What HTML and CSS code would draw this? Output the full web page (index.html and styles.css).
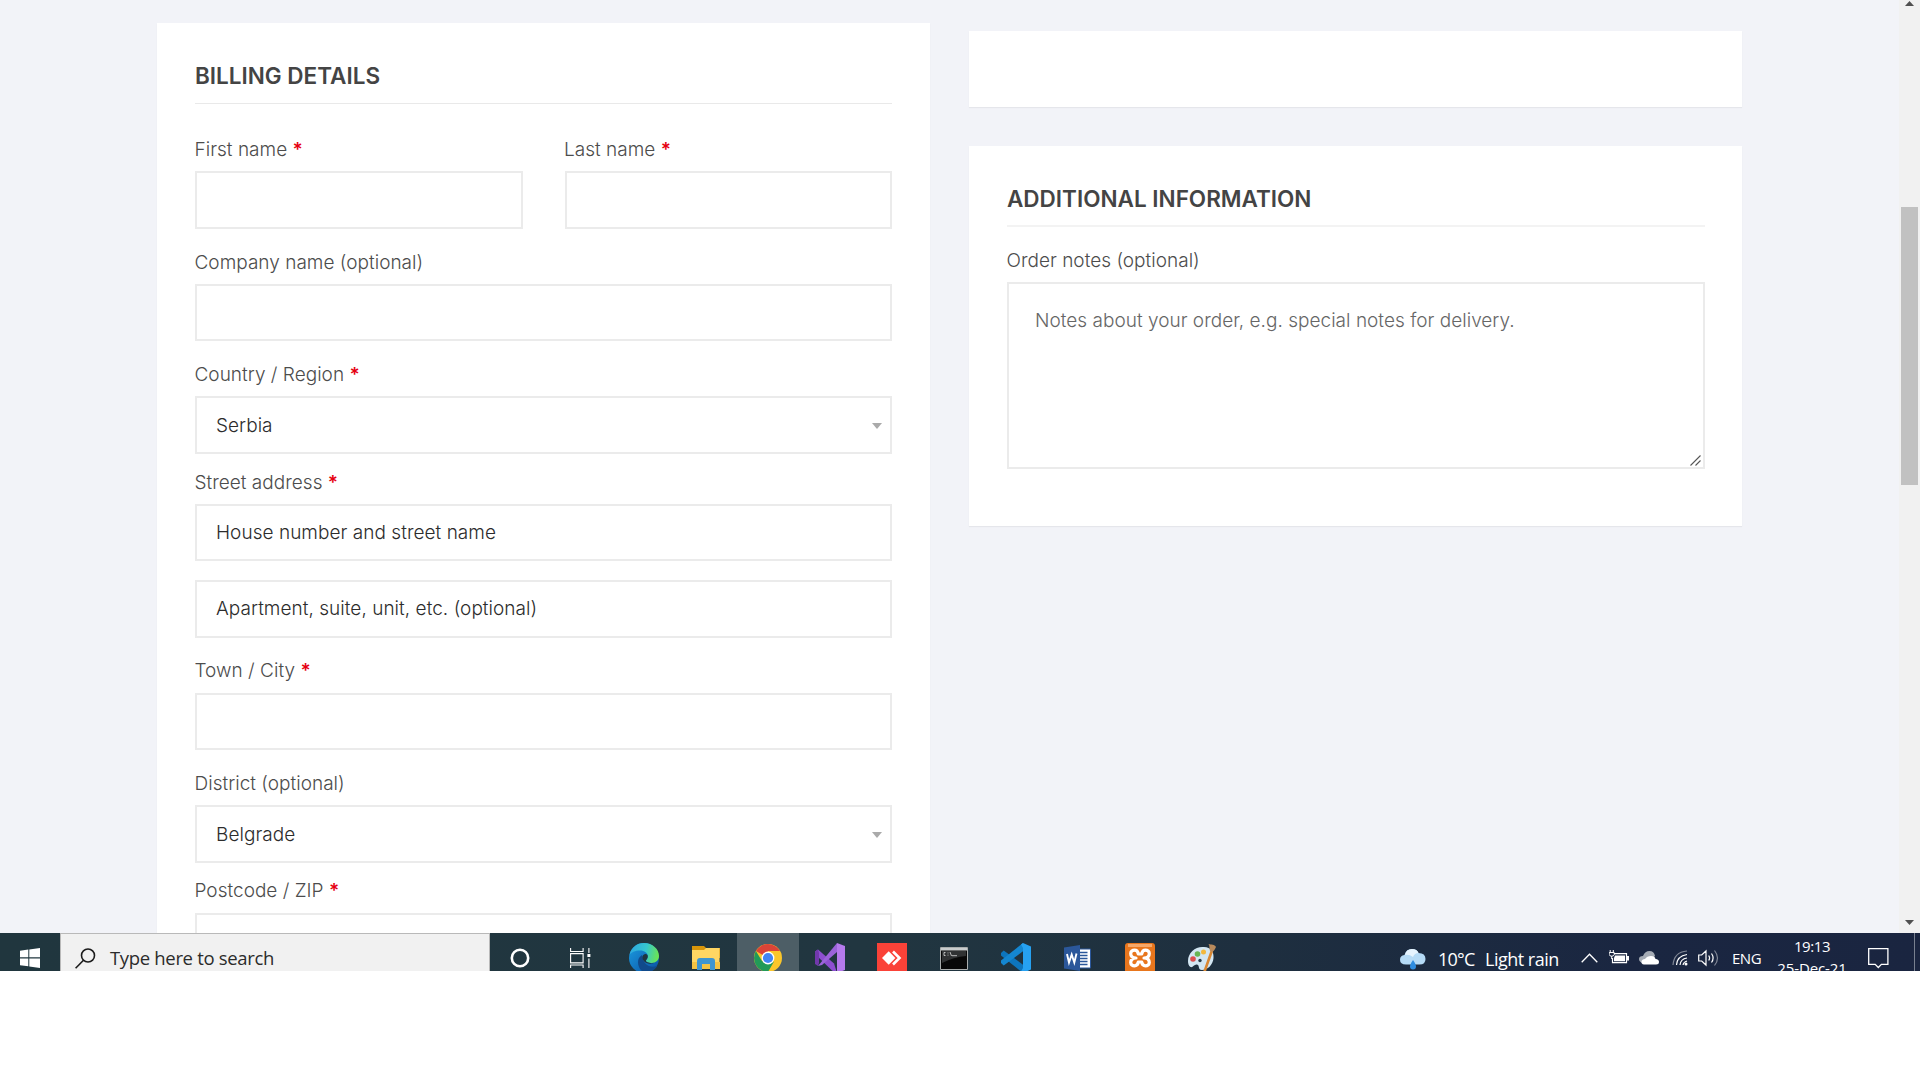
FILE: index.html
```html
<!DOCTYPE html>
<html lang="en">
<head>
<meta charset="utf-8">
<title>Checkout</title>
<link rel="stylesheet" href="styles.css">
</head>
<body>
<div class="browser">
  <main class="page">
    <section class="card billing">
      <h3>BILLING DETAILS</h3>
      <div class="pair">
        <div class="field"><label>First name <b>*</b></label><div class="input tall"></div></div>
        <div class="field"><label>Last name <b>*</b></label><div class="input tall"></div></div>
      </div>
      <div class="field"><label>Company name (optional)</label><div class="input"></div></div>
      <div class="field"><label>Country / Region <b>*</b></label><div class="input tall select">Serbia<i class="caret"></i></div></div>
      <div class="field after-select"><label>Street address <b>*</b></label><div class="input">House number and street name</div><div class="input tall second">Apartment, suite, unit, etc. (optional)</div></div>
      <div class="field town"><label>Town / City <b>*</b></label><div class="input"></div></div>
      <div class="field"><label>District (optional)</label><div class="input tall select">Belgrade<i class="caret"></i></div></div>
      <div class="field postcode"><label>Postcode / ZIP <b>*</b></label><div class="input"></div></div>
    </section>
    <div class="side">
      <section class="card empty"></section>
      <section class="card extra">
        <h3>ADDITIONAL INFORMATION</h3>
        <div class="field"><label>Order notes (optional)</label>
          <div class="notes">Notes about your order, e.g. special notes for delivery.
            <svg class="grip" width="11" height="11" viewBox="0 0 11 11"><path d="M.5 10.5 10.5.5M5.5 10.5l5-5" stroke="#555" stroke-width="1.1"/></svg>
          </div>
        </div>
      </section>
    </div>
  </main>
  <div class="scrollbar">
    <svg width="9" height="5" viewBox="0 0 9 5"><path d="M0 5 4.5 0 9 5z" fill="#505050"/></svg>
    <div class="thumb"></div>
    <svg class="down" width="9" height="5" viewBox="0 0 9 5"><path d="M0 0h9L4.500 5z" fill="#505050"/></svg>
  </div>
</div>
<footer class="taskbar">
  <div class="start"><svg width="20" height="20" viewBox="0 0 20 20" fill="#fff"><path d="M0 2.700 8.300 1.600V9.300H0zM9.300 1.400 20 0v9.300H9.300zM0 10.400h8.300v7.900L0 17.200zM9.300 10.400H20V20L9.300 18.500z"/></svg></div>
  <div class="search">
    <svg width="21" height="21" viewBox="0 0 21 21" fill="none" stroke="#1b1b1b" stroke-width="1.600"><circle cx="13" cy="7.500" r="6.500"/><path d="M8.500 12.200.6 20.200"/></svg>
    <span>Type here to search</span>
  </div>
  <div class="app cortana"><svg width="20" height="20" viewBox="0 0 20 20"><circle cx="10" cy="10" r="8.200" fill="none" stroke="#fff" stroke-width="2.600"/></svg></div>
  <div class="app tasks"><svg width="21" height="20" viewBox="0 0 21 20" fill="none" stroke="#fff" stroke-width="1.100"><path d="M.6 0v3.500h12.500V0M.6 5.600h12.500v9.300H.6zM.6 20v-3h12.500v3M18.900 0v5M18.900 10.500V20"/><path d="M17.400 6h3v3h-3z" fill="#fff" stroke="none"/></svg></div>
  <div class="app"><svg width="30" height="30" viewBox="0 0 30 30">
    <defs><linearGradient id="e1" x1="0" x2="1" y1=".3" y2=".45"><stop stop-color="#2da7e0"/><stop offset=".55" stop-color="#36c7cf"/><stop offset="1" stop-color="#6be552"/></linearGradient><linearGradient id="e2" x1="0" x2="1" y1="0" y2="1"><stop stop-color="#1b9de2"/><stop offset="1" stop-color="#0a4ea0"/></linearGradient></defs>
    <circle cx="15" cy="15" r="15" fill="url(#e2)"/>
    <path d="M.5 12C2 4.500 8 0 15 0c8.500 0 15 6 15 13 0 4-3 7-7.500 7-4 0-5.800-1.300-5.600-2.400.2-.9 1.900-1.600 1.900-4.300C18.800 10 15.500 7.500 11 7.500 6 7.500 2 9.500.5 12z" fill="url(#e1)"/>
    <path d="M13 12c-4 2.500-5 7-3 12 1.500 3.500 4 5.200 7 5.700 5-.3 9-3 11.500-7C21 25.500 14 22 13 12z" fill="#114a8b"/>
    <path d="M16.900 17.600c.2-.9 1.900-1.600 1.900-4.300 0-1.500-1-2.600-2.800-2.300-2.800.7-3.500 4-1.500 6.500 2.500 3.500 7 4 11 2.300-4 1-9-.3-8.600-2.200z" fill="#203640"/></svg></div>
  <div class="app"><svg class="folder" width="28" height="24" viewBox="0 0 28 24"><path d="M0 0h12l2 2h14v10H0z" fill="#d9960a"/><path d="M0 4h12l2-2h13.500v20H0z" fill="#ffd663"/><path d="M0 16h28v7H0z" fill="#f5c342"/><path d="M5 24v-9q0-3 3-3h12q3 0 3 3v9h-5v-6h-8v6z" fill="#3f95cf"/></svg></div>
  <div class="app active"><svg width="28" height="28" viewBox="0 0 28 28"><circle cx="14" cy="14" r="14" fill="#fbc62b"/><path d="M14 14 1.900 7A14 14 0 0 1 26.100 7H14z" fill="#dc4437"/><path d="M1.900 7A14 14 0 0 0 14 28l6-10.500L14 20 8 17z" fill="#229a58"/><circle cx="14" cy="14" r="6.400" fill="#fff"/><circle cx="14" cy="14" r="5.100" fill="#4285f4"/></svg></div>
  <div class="app"><svg width="30" height="30" viewBox="0 0 30 30"><path d="M0 8.500 3 6.500 19 20.500 22 30 17 27.500 0 11z" fill="#8d4fd0"/><path d="M0 8.500 3 6.500 4 10v10l-1 3-3-2z" fill="#7138ac"/><path d="M3 23 22 0v9L7 22l-4 1z" fill="#9b63da"/><path d="M22 0 30 3v24l-8 3z" fill="#b57aec"/></svg></div>
  <div class="app"><svg width="30" height="30" viewBox="0 0 30 30"><path d="M0 0h30v30H0z" fill="#fa4238"/><path d="M5 15l6.700-6.700 6.700 6.700-6.700 6.700z" fill="#fff"/><path d="M16 8.500 22.500 15 16 21.500" fill="none" stroke="#fff" stroke-width="2.600"/></svg></div>
  <div class="app"><svg width="28" height="23" viewBox="0 0 28 23"><path d="M.5.5h27v22H.5z" fill="#080808" stroke="#a9adad"/><path d="M1 1h26v2.500H1z" fill="#c9cccd"/><path d="M2 4h24v5Q14 10 2 16z" fill="#303233"/><path d="M5.500 5.500H4v3h1.500M8 5.500v.9M8 7.700v.9M10 5l1.500 4M12 8.700h5" stroke="#ddd" stroke-width=".8" fill="none"/></svg></div>
  <div class="app"><svg width="30" height="30" viewBox="0 0 30 30"><path d="M0 10 2.700 7.500 22 21.700V30L0 12.500z" fill="#0d75bd"/><path d="M0 20 2.700 22.500 22 8.300V0L0 17.500z" fill="#1486d0"/><path d="M22 0 30 3.500v23L22 30l-2-1.500 2-3.500V5l-2-3.500z" fill="#26a1f1"/></svg></div>
  <div class="app word"><svg width="27" height="28" viewBox="0 0 27 28"><path d="M13 5h13.500v19H13z" fill="#fff" stroke="#2b579a"/><path d="M16 8.500h7.500M16 11.500h7.500M16 14.500h7.500M16 17.500h7.500M16 20.500h7.500" stroke="#2b579a" stroke-width="1.400"/><path d="M0 3.500 16 1v26L0 24.500z" fill="#2b579a"/><path d="M3 10l2 8.500 2.700-8 2.600 8 2.200-9" fill="none" stroke="#fff" stroke-width="1.900"/></svg></div>
  <div class="app"><svg width="30" height="30" viewBox="0 0 30 30"><rect width="30" height="30" rx="3" fill="#e8761d"/><path d="M3 1h24v3H3z" fill="#f5a86a"/><path d="M11 15C8 15 5.700 13.500 5.700 10.500 5.700 8.500 7.500 7.200 9.500 7.200c2.500 0 3.500 1.800 3.800 3.800h3.400c.3-2 1.300-3.800 3.800-3.800 2 0 3.800 1.300 3.800 3.300C24.300 13.500 22 15 19 15c3 0 5.300 1.500 5.300 4.500 0 2-1.800 3.300-3.800 3.300-2.500 0-3.500-1.800-3.800-3.800h-3.400c-.3 2-1.300 3.800-3.800 3.800-2 0-3.800-1.300-3.800-3.300C5.700 16.500 8 15 11 15z" fill="none" stroke="#fff" stroke-width="3.200" stroke-linejoin="round"/></svg></div>
  <div class="app"><svg width="30" height="30" viewBox="0 0 30 30"><path d="M1 18C1 9 9 3 17 4c7 .5 10 5 9.500 11-.5 7-6 12-11.500 12-4.500 0-2-5-5-5.500C7 21 6 25 3.500 24 1.500 23 1 20.500 1 18z" fill="#d3e6f2"/><circle cx="6" cy="16" r="2.800" fill="#dd4f4f"/><circle cx="10.500" cy="11" r="2.800" fill="#68b553"/><circle cx="16.500" cy="9" r="2.500" fill="#f3b83c"/><circle cx="13" cy="17.500" r="1.700" fill="#253a48"/><path d="M17 30 25.500 6" stroke="#d98732" stroke-width="2.600"/><path d="M23 8c-1-3 0-5-1.500-7 3 1 6 0 7.500 3-1 2-2 4-4 5z" fill="#b98a5c"/></svg></div>
  <div class="tray">
    <svg class="weather" width="26" height="21" viewBox="0 0 26 21"><path d="M6 15.500Q0 15.500 0 10.700 0 6.500 4.500 6 6 0 12 0q5 0 6.500 4 7 0 7 6 0 5.500-6 5.500z" fill="#b5dbf6"/><path d="M5 6Q6 0 12 0q5 0 6.500 4-4 0-5.500 4-4-3-8-2z" fill="#e6f4fe"/><path d="M13 11q3 4 3 6.500a3 3 0 0 1-6 0Q10 15 13 11z" fill="#2f8de0"/></svg>
    <span class="temp">10°C</span><span class="rain">Light rain</span>
    <svg class="chev" width="17" height="10" viewBox="0 0 17 10"><path d="M.7 9.300 8.500 1.300l7.800 8" fill="none" stroke="#fff" stroke-width="1.300"/></svg>
    <svg class="batt" width="20" height="14" viewBox="0 0 20 14"><path d="M5 3.700h12.500v9H3.500V8" fill="none" stroke="#fff" stroke-width="1.200"/><path d="M6 5.500h10v5.700H5V8zM18 6h2v4.500h-2z" fill="#fff"/><path d="M1.200 0v2.500M4.300 0v2.500M.2 2.500h5v2.200q-.5 1.500-2.500 1.500T.2 4.700zM2.700 6v3" fill="none" stroke="#fff"/></svg>
    <svg class="cloud" width="20" height="14" viewBox="0 0 20 14"><path d="M4 12Q0 11 0 8q0-3 4-3Q6 0 10.500 0 15 0 16 5l-7 7z" fill="#a6acb5"/><path d="M5 13.500q-3-.5-2.500-3Q3 8 6 8q2-3 6-3 4 0 4.500 3 3.500.3 3.500 3 0 2.500-3 2.500z" fill="#fff"/></svg>
    <svg class="wifi" width="16" height="16" viewBox="0 0 16 16" fill="none" stroke="#fff" stroke-width="1.200"><path d="M1 15Q2 2 15 1" opacity=".45"/><path d="M4.500 15Q5 6 15 4.500M8 15q.5-6 7-7M11 15q.5-3 4-4"/><circle cx="14" cy="14" r="1.500" fill="#fff" stroke="none"/></svg>
    <svg class="vol" width="21" height="18" viewBox="0 0 21 18" fill="none" stroke="#fff" stroke-width="1.200"><path d="M.7 6v6h3L8 16V2L3.700 6zM10.700 6.500q1.800 2.500 0 5M13.500 4.500q3.200 4.500 0 9"/><path d="M16.500 1.500q6 7.500 0 15" opacity=".45"/></svg>
    <span class="lang">ENG</span>
    <div class="clock"><span>19:13</span><span class="date">25-Dec-21</span></div>
    <svg class="notif" width="21" height="21" viewBox="0 0 21 21"><path d="M.7.7h19.200v15.600h-6.500L10.300 19.500 7.200 16.300H.7z" fill="none" stroke="#fff" stroke-width="1.300"/></svg>
    <i class="peek"></i>
  </div>
</footer>
</body>
</html>
```
FILE: styles.css
```css
* { box-sizing: border-box; }
body { margin: 0; height: 1080px; overflow: hidden; background: #fff; font-family: Inter, "Liberation Sans", sans-serif; }
.browser { display: flex; height: 933px; overflow: hidden; background: #f2f3f8; }
.page { flex: 1; display: flex; align-items: flex-start; gap: 39px; padding: 23px 0 0 157px; }
.card { width: 773px; padding: 38px 37px 0 38px; background: #fff; box-shadow: 0 1px 1px rgba(0,0,0,.05); }
.billing { height: 960px; padding-right: 38px; }
.side { display: flex; flex-direction: column; gap: 39px; padding-top: 8px; }
.empty { height: 76px; padding: 0; }
.extra { height: 380px; }
h3 { margin: 0 0 31px; padding-bottom: 12px; border-bottom: 1px solid #e9e9e9; font-size: 22.5px; line-height: 30px; font-weight: 600; color: #444; }
.extra h3 { margin-bottom: 19px; padding-bottom: 11px; border-bottom: 2px solid #f3f3f3; }
.field { margin-top: 19px; }
.pair { display: flex; gap: 42px; }
.pair .field { flex: 1; margin: 0; }
.extra .field { margin: 0; }
label { display: block; margin: 0 0 8px -.5px; padding-top: 2px; font-size: 19px; line-height: 26px; font-weight: 300; color: #4c4c4c; letter-spacing: .02px; white-space: nowrap; }
label b { color: #e60012; font-weight: 600; }
.input { display: flex; align-items: center; height: 57px; padding: 0 12px 0 19px; border: 2px solid #ebebeb; font-size: 19px; font-weight: 300; color: #2c2c2c; letter-spacing: .04px; white-space: nowrap; }
.tall { height: 58px; }
.second { margin-top: 19px; padding-bottom: 1px; }
.select { justify-content: space-between; }
.caret { border: 5px solid transparent; border-top: 6px solid #aaa; border-bottom: 0; margin-right: -4px; margin-top: 1px; }
.after-select { margin-top: 14px; }
.town { margin-top: 18px; }
.town label { margin-bottom: 9px; }
.postcode { margin-top: 13px; }
.postcode label { margin-bottom: 9px; }
.notes { position: relative; height: 187px; padding: 23px 26px; border: 2px solid #ebebeb; font-size: 19px; line-height: 28px; font-weight: 300; color: #666; letter-spacing: .02px; white-space: nowrap; }
.grip { position: absolute; right: 2px; bottom: 1px; }
.scrollbar { width: 21px; display: flex; flex-direction: column; align-items: center; background: #f1f1f1; padding-top: 1px; }
.thumb { width: 17px; height: 278px; margin-top: 201px; background: #c1c1c1; }
.down { margin: auto 0 8px; }
.taskbar { display: flex; height: 38px; overflow: hidden; background: linear-gradient(90deg, #20363e 0, #213640 45%, #1e2f3f 65%, #1a2641 85%, #1a2540 100%); color: #fff; font-family: "Open Sans", sans-serif; }
.taskbar svg { display: block; flex: none; }
.start { width: 60px; padding: 15px 20px 0; }
.search { display: flex; width: 430px; padding: 14px 0 0 14px; border: solid #b9b9b9; border-width: 1px 1px 0; background: #f1f1f1; color: #2b2b2b; font-size: 18.500px; line-height: 25px; white-space: nowrap; }
.search span { margin: -3px 0 0 14px; letter-spacing: -.33px; }
.app { display: flex; justify-content: center; align-items: center; width: 62px; height: 50px; flex: none; }
.cortana { width: 60px; }
.tasks { width: 63px; padding-right: 3px; }
.active { background: #4d5e66; }
.word { padding-right: 2px; }
.tray { display: flex; flex: 1; white-space: nowrap; margin-left: 167px; font-size: 18px; line-height: 24px; }
.tray > * { flex: none; }
.weather { margin-top: 16px; }
.temp { width: 47px; margin: 14px 0 0 12px; letter-spacing: -.8px; }
.rain { width: 96px; margin-top: 14px; letter-spacing: -.5px; }
.chev { margin-top: 20px; }
.batt { margin: 17px 0 0 11px; }
.cloud { margin: 18px 0 0 10px; }
.wifi { margin: 17px 0 0 13px; }
.vol { margin: 16px 0 0 10px; }
.lang { width: 45px; margin: 13px 0 0 13px; font-size: 15px; letter-spacing: -.5px; }
.clock { display: flex; flex-direction: column; align-items: center; width: 70px; margin-top: 2px; font-size: 15px; line-height: 23px; letter-spacing: -.4px; }
.date { letter-spacing: -.1px; margin-top: -1px; }
.notif { margin: 15px 0 0 21px; }
.peek { width: 1px; margin-left: 25px; background: #78808f; }
```
